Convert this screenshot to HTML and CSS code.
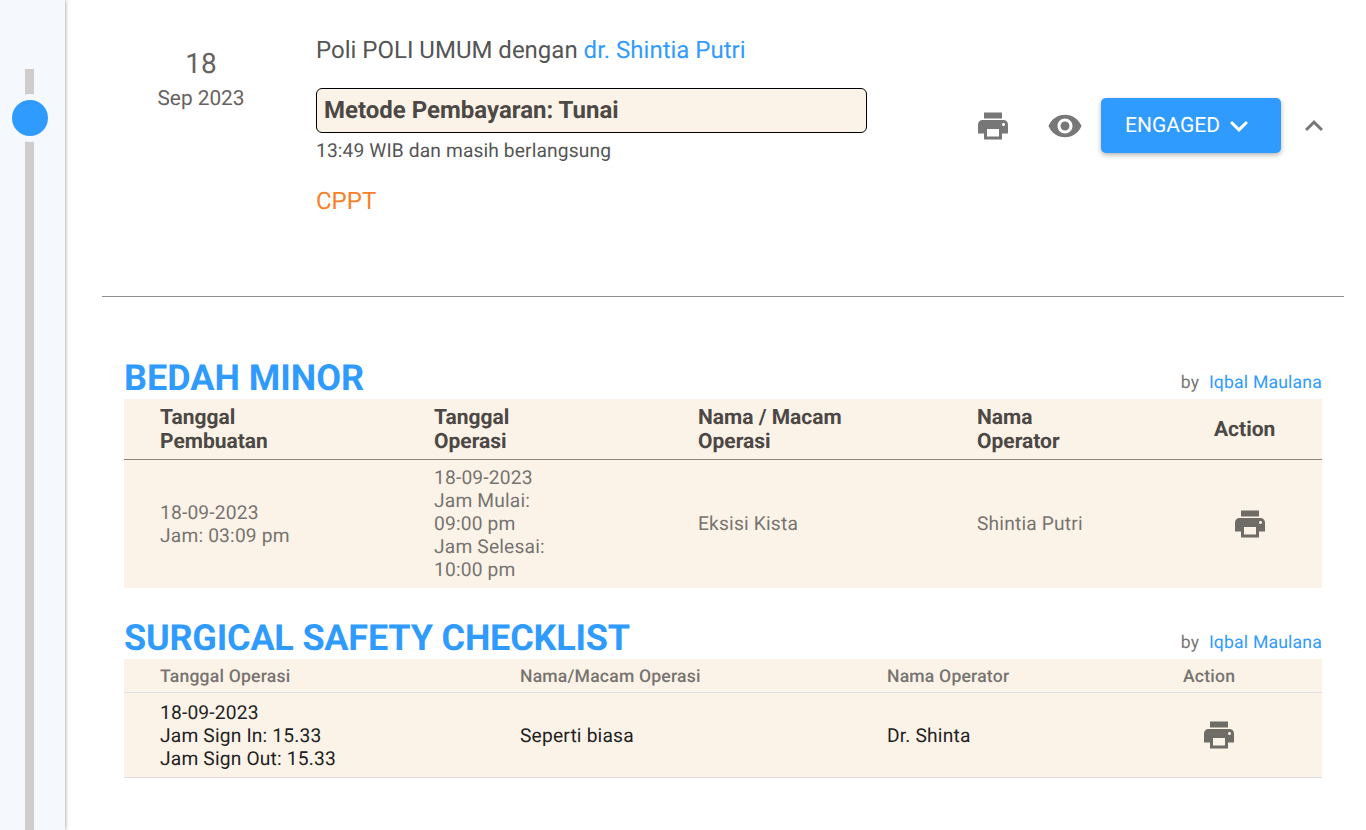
FILE: index.html
```html
<!DOCTYPE html>
<html>
	<head>
		<meta charset="UTF-8">
		<title>Riwayat kunjungan</title>
		<link rel="stylesheet" href="styles.css">
	</head>
	<body>
		<div class="page">
			<aside class="rail">
				<div class="rail-line"></div>
				<div class="rail-dot"></div>
			</aside>
			<main class="content">
				<section class="visit">
					<div class="visit-date">
						<div class="day">18</div>
						<div class="month">Sep 2023</div>
					</div>
					<div class="visit-info">
						<div class="poli">Poli POLI UMUM dengan <a class="link">dr. Shintia Putri</a></div>
						<div class="payment">Metode Pembayaran: Tunai</div>
						<div class="time">13:49 WIB dan masih berlangsung</div>
						<div class="cppt">CPPT</div>
					</div>
					<div class="visit-actions">
						<svg class="icon icon-print" viewBox="0 0 24 24"><path d="M19 8H5c-1.66 0-3 1.34-3 3v6h4v4h12v-4h4v-6c0-1.66-1.34-3-3-3zm-3 11H8v-5h8v5zm3-7c-.55 0-1-.45-1-1s.45-1 1-1 1 .45 1 1-.45 1-1 1zm-1-9H6v4h12V3z"/></svg>
						<svg class="icon icon-eye" viewBox="0 0 24 24"><path d="M12 4.5C7 4.5 2.73 7.61 1 12c1.73 4.39 6 7.5 11 7.5s9.27-3.11 11-7.5c-1.73-4.39-6-7.5-11-7.5zM12 17c-2.76 0-5-2.24-5-5s2.24-5 5-5 5 2.24 5 5-2.24 5-5 5zm0-8c-1.66 0-3 1.34-3 3s1.34 3 3 3 3-1.34 3-3-1.34-3-3-3z"/></svg>
						<button class="status">ENGAGED
							<svg class="status-arrow" viewBox="0 0 24 24"><path d="M16.59 8.59L12 13.17 7.41 8.59 6 10l6 6 6-6z"/></svg>
						</button>
						<svg class="icon icon-less" viewBox="0 0 24 24"><path d="M12 8l-6 6 1.41 1.41L12 10.83l4.59 4.58L18 14z"/></svg>
					</div>
				</section>
				<hr class="divider">
				<section class="block block-bedah">
					<div class="block-head">
						<h2>BEDAH MINOR</h2>
						<div class="by">by <a class="link">Iqbal Maulana</a></div>
					</div>
					<table class="grid grid-bedah">
						<colgroup>
							<col class="b1"><col class="b2"><col class="b3"><col class="b4"><col>
						</colgroup>
						<thead>
							<tr>
								<th>Tanggal<br>Pembuatan</th>
								<th>Tanggal<br>Operasi</th>
								<th>Nama / Macam<br>Operasi</th>
								<th>Nama<br>Operator</th>
								<th>Action</th>
							</tr>
						</thead>
						<tbody>
							<tr>
								<td>18-09-2023<br>Jam: 03:09 pm</td>
								<td>18-09-2023<br>Jam Mulai:<br>09:00 pm<br>Jam Selesai:<br>10:00 pm</td>
								<td>Eksisi Kista</td>
								<td>Shintia Putri</td>
								<td><svg class="row-print" viewBox="0 0 24 24"><path d="M19 8H5c-1.66 0-3 1.34-3 3v6h4v4h12v-4h4v-6c0-1.66-1.34-3-3-3zm-3 11H8v-5h8v5zm3-7c-.55 0-1-.45-1-1s.45-1 1-1 1 .45 1 1-.45 1-1 1zm-1-9H6v4h12V3z"/></svg></td>
							</tr>
						</tbody>
					</table>
				</section>
				<section class="block block-safety">
					<div class="block-head">
						<h2>SURGICAL SAFETY CHECKLIST</h2>
						<div class="by">by <a class="link">Iqbal Maulana</a></div>
					</div>
					<table class="grid grid-safety">
						<colgroup>
							<col class="s1"><col class="s2"><col class="s3"><col>
						</colgroup>
						<thead>
							<tr>
								<th>Tanggal Operasi</th>
								<th>Nama/Macam Operasi</th>
								<th>Nama Operator</th>
								<th>Action</th>
							</tr>
						</thead>
						<tbody>
							<tr>
								<td>18-09-2023<br>Jam Sign In: 15.33<br>Jam Sign Out: 15.33</td>
								<td>Seperti biasa</td>
								<td>Dr. Shinta</td>
								<td><svg class="row-print" viewBox="0 0 24 24"><path d="M19 8H5c-1.66 0-3 1.34-3 3v6h4v4h12v-4h4v-6c0-1.66-1.34-3-3-3zm-3 11H8v-5h8v5zm3-7c-.55 0-1-.45-1-1s.45-1 1-1 1 .45 1 1-.45 1-1 1zm-1-9H6v4h12V3z"/></svg></td>
							</tr>
						</tbody>
					</table>
				</section>
			</main>
		</div>
	</body>
</html>
```

FILE: styles.css
```css
html, body { margin: 0; height: 100%; overflow: hidden; }
body { background: #fff; color: #4f4b49; font-family: Roboto, sans-serif; text-rendering: geometricPrecision; }

.page { display: flex; height: 830px; }
.link { color: #2f9bff; }

/* timeline rail */
.rail { position: relative; flex: 0 0 65px; background: #f5f9fd; box-shadow: 0 0 4px rgba(0,0,0,.45); }
.rail-line { position: absolute; left: 25px; top: 69px; bottom: 0; width: 9px; background: #d1cdcd; }
.rail-dot { position: absolute; left: 12px; top: 100px; width: 36px; height: 36px; border-radius: 50%; background: #2f9bff; box-shadow: 0 0 0 6px #f5f9fd; }

.content { flex: 1; padding-left: 37px; padding-right: 22px; min-width: 0; }

/* visit header */
.visit { display: flex; height: 296px; box-sizing: border-box; padding-top: 36px; }
.visit-date { width: 198px; text-align: center; color: #666261; padding-top: 13px; }
.day { font-size: 28px; line-height: 30px; }
.month { font-size: 20.8px; line-height: 24px; margin-top: 8px; }
.visit-info { width: 551px; margin-left: 16px; }
.poli { font-size: 24px; line-height: 28px; color: #555; }
.payment { margin-top: 24px; height: 45px; box-sizing: border-box; border: 1px solid #000; border-radius: 6px; background: #fcf3e8; padding: 0 7px; font-size: 24px; line-height: 43px; font-weight: 700; color: #4c4845; }
.time { font-size: 19.2px; line-height: 24px; margin-top: 6px; color: #555; letter-spacing: .13px; }
.cppt { font-size: 24px; line-height: 30px; margin-top: 23px; color: #fb7e28; }

.visit-actions { display: flex; align-items: center; margin-left: 108px; height: 55px; margin-top: 62px; }
.icon { width: 36px; height: 36px; fill: #777; flex: none; }
.icon-eye { margin-left: 36px; }
.icon-less { margin-left: 15px; }
.status { display: flex; align-items: center; justify-content: center; width: 180px; height: 55px; margin-left: 18px; border: 0; border-radius: 5px; padding: 0; background: #2f9bff; color: #fff; font-family: Roboto, sans-serif; font-size: 21px; box-shadow: 0 2px 5px rgba(0,0,0,.3); text-rendering: geometricPrecision; }
.status-arrow { width: 36px; height: 36px; fill: #fff; margin-left: 1px; }

.divider { margin: 0; border: 0; height: 1px; background: #8d8d8d; }

/* record blocks */
.block { margin: 0 0 0 22px; width: 1198px; }
.block-bedah { margin-top: 60px; }
.block-safety { margin-top: 29px; }
.block-head { display: flex; justify-content: space-between; align-items: flex-end; height: 42px; }
.block-head h2 { margin: 0; font-size: 36px; line-height: 42px; font-weight: 700; color: #2f9bff; }
.block-safety h2 { letter-spacing: -.2px; }
.by { font-size: 17.6px; line-height: 24px; color: #777; margin-bottom: 4px; letter-spacing: .19px; }
.by .link { margin-left: 5px; }

.grid { width: 100%; border-collapse: collapse; table-layout: fixed; background: #fcf3e8; }
.grid th, .grid td { text-align: left; padding: 0 0 0 36px; }

.grid-bedah th { height: 60px; padding-top: 2px; box-sizing: border-box; border-bottom: 1px solid #8f8580; font-size: 21px; line-height: 24px; font-weight: 700; color: #4c4845; }
.grid-bedah td { height: 128px; font-size: 19.2px; line-height: 23px; color: #777370; letter-spacing: .18px; }
.grid-bedah .b1 { width: 274px; }
.grid-bedah .b2 { width: 264px; }
.grid-bedah .b3 { width: 279px; }
.grid-bedah .b4 { width: 201px; }
.grid-bedah th:last-child { padding-left: 72px; }
.grid-bedah td:last-child { padding-left: 90px; }

.grid-safety th { height: 34px; padding-top: 3px; box-sizing: border-box; border-bottom: 1px solid #e0dfe3; font-size: 17.6px; line-height: 22px; font-weight: 500; color: #777370; letter-spacing: .19px; }
.grid-safety td { height: 84px; border-bottom: 1px solid #e0dfe3; font-size: 19.2px; line-height: 23px; color: #222; letter-spacing: .18px; }
.grid-safety .s1 { width: 360px; }
.grid-safety .s2 { width: 367px; }
.grid-safety .s3 { width: 296px; }
.grid-safety th:last-child { padding-left: 36px; }
.grid-safety td:last-child { padding-left: 54px; }

.row-print { display: block; width: 36px; height: 36px; fill: #6f6b66; }
```
